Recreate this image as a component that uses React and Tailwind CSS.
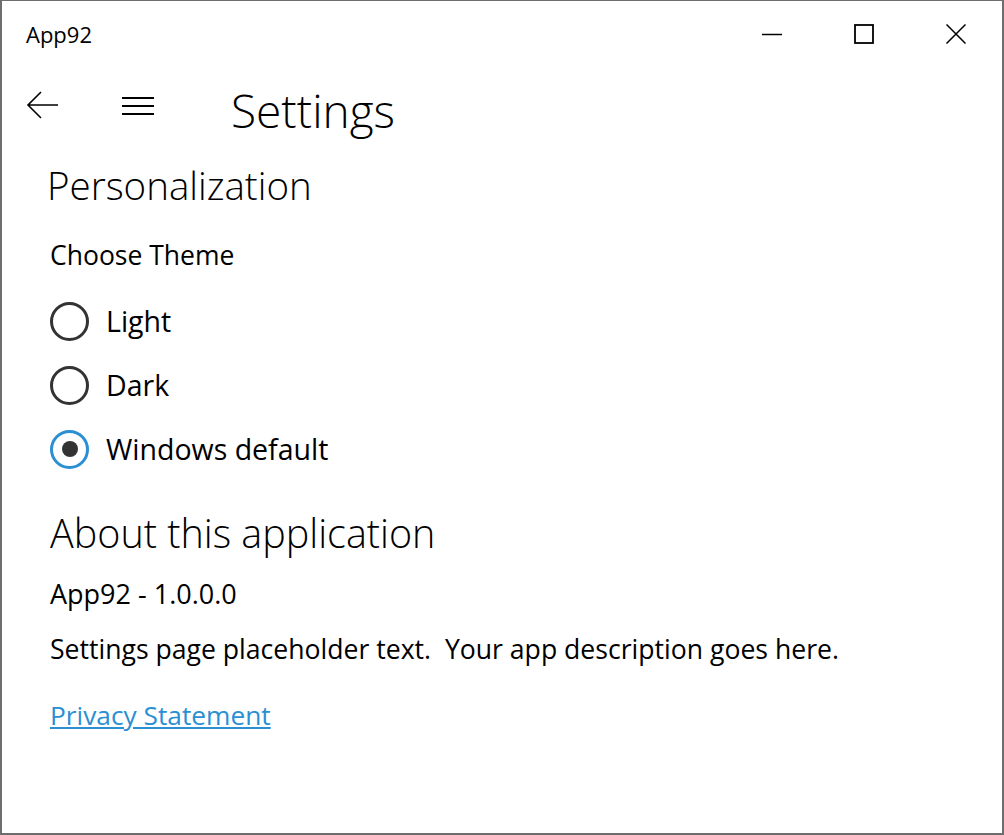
import { useState } from 'react';

// Window chrome glyphs drawn thin, like the system caption buttons
const CaptionButtons = () => (
  <div className="flex items-center">
    <button className="w-[92px] h-[66px] flex items-center justify-center">
      <svg width="20" height="20" viewBox="0 0 20 20">
        <path d="M0 10.5H20" stroke="#000" strokeWidth="1.5" />
      </svg>
    </button>
    <button className="w-[92px] h-[66px] flex items-center justify-center">
      <svg width="20" height="20" viewBox="0 0 20 20">
        <rect x="1" y="1" width="18" height="18" fill="none" stroke="#000" strokeWidth="1.8" />
      </svg>
    </button>
    <button className="w-[92px] h-[66px] flex items-center justify-center">
      <svg width="20" height="20" viewBox="0 0 20 20">
        <path d="M0.5 0.5L19.5 19.5M19.5 0.5L0.5 19.5" stroke="#000" strokeWidth="1.5" />
      </svg>
    </button>
  </div>
);

const Radio = ({ label, checked, onSelect }) => (
  <label className="flex items-center h-[64px] cursor-pointer" onClick={onSelect}>
    <span
      className={`w-[39px] h-[39px] rounded-full border-[3px] flex items-center justify-center ${
        checked ? 'border-[#2b8fd3]' : 'border-[#333333]'
      }`}
    >
      {checked && <span className="w-[16px] h-[16px] rounded-full bg-[#333333]" />}
    </span>
    <span className="ml-[17px] text-[28.5px] text-black leading-[40px]">{label}</span>
  </label>
);

export default function App() {
  const [theme, setTheme] = useState('default');

  return (
    <div
      className="w-[1004px] h-[835px] bg-white border-[2px] border-t-[1px] border-[#6e6e6e] flex flex-col overflow-hidden"
      style={{ fontFamily: '"Open Sans", "Noto Sans", sans-serif' }}
    >
      {/* Title bar */}
      <div className="flex items-center justify-between h-[66px] shrink-0">
        <span className="pl-[24px] text-[22px] text-black">App92</span>
        <CaptionButtons />
      </div>

      {/* Header */}
      <div className="flex items-center h-[78px] shrink-0">
        <button className="w-[82px] h-[78px] flex items-center justify-center -mt-[3px]">
          <svg width="34" height="30" viewBox="0 0 34 30">
            <path d="M32 15H2M15 2L2 15l13 13" fill="none" stroke="#000" strokeWidth="1.6" />
          </svg>
        </button>
        <button className="ml-[2px] w-[104px] h-[78px] flex items-center justify-center">
          <svg width="32" height="18" viewBox="0 0 32 18">
            <path d="M0 1H32M0 9H32M0 17H32" stroke="#000" strokeWidth="2" />
          </svg>
        </button>
        <h1 className="ml-[41px] mt-[8px] text-[46px] font-light text-black leading-none">Settings</h1>
      </div>

      {/* Content */}
      <div className="pl-[45px] flex flex-col">
        <h2 className="mt-[14px] text-[38.5px] font-light text-black leading-[52px]">Personalization</h2>
        <div className="pl-[3px] flex flex-col">
          <p className="mt-[28px] text-[26.5px] text-black leading-[32px]">Choose Theme</p>
          <div className="mt-[18px] flex flex-col">
            <Radio label="Light" checked={theme === 'light'} onSelect={() => setTheme('light')} />
            <Radio label="Dark" checked={theme === 'dark'} onSelect={() => setTheme('dark')} />
            <Radio label="Windows default" checked={theme === 'default'} onSelect={() => setTheme('default')} />
          </div>

          <h2 className="mt-[26px] text-[39.5px] font-light text-black leading-[52px]">About this application</h2>
          <p className="mt-[19px] text-[27px] text-black leading-[32px]">App92 - 1.0.0.0</p>
          <p className="mt-[23px] text-[26.6px] text-black leading-[32px] whitespace-pre">
            Settings page placeholder text.  Your app description goes here.
          </p>
          <a href="#" className="mt-[34px] text-[26.3px] text-[#2b8fd3] underline leading-[32px] self-start">
            Privacy Statement
          </a>
        </div>
      </div>
    </div>
  );
}
